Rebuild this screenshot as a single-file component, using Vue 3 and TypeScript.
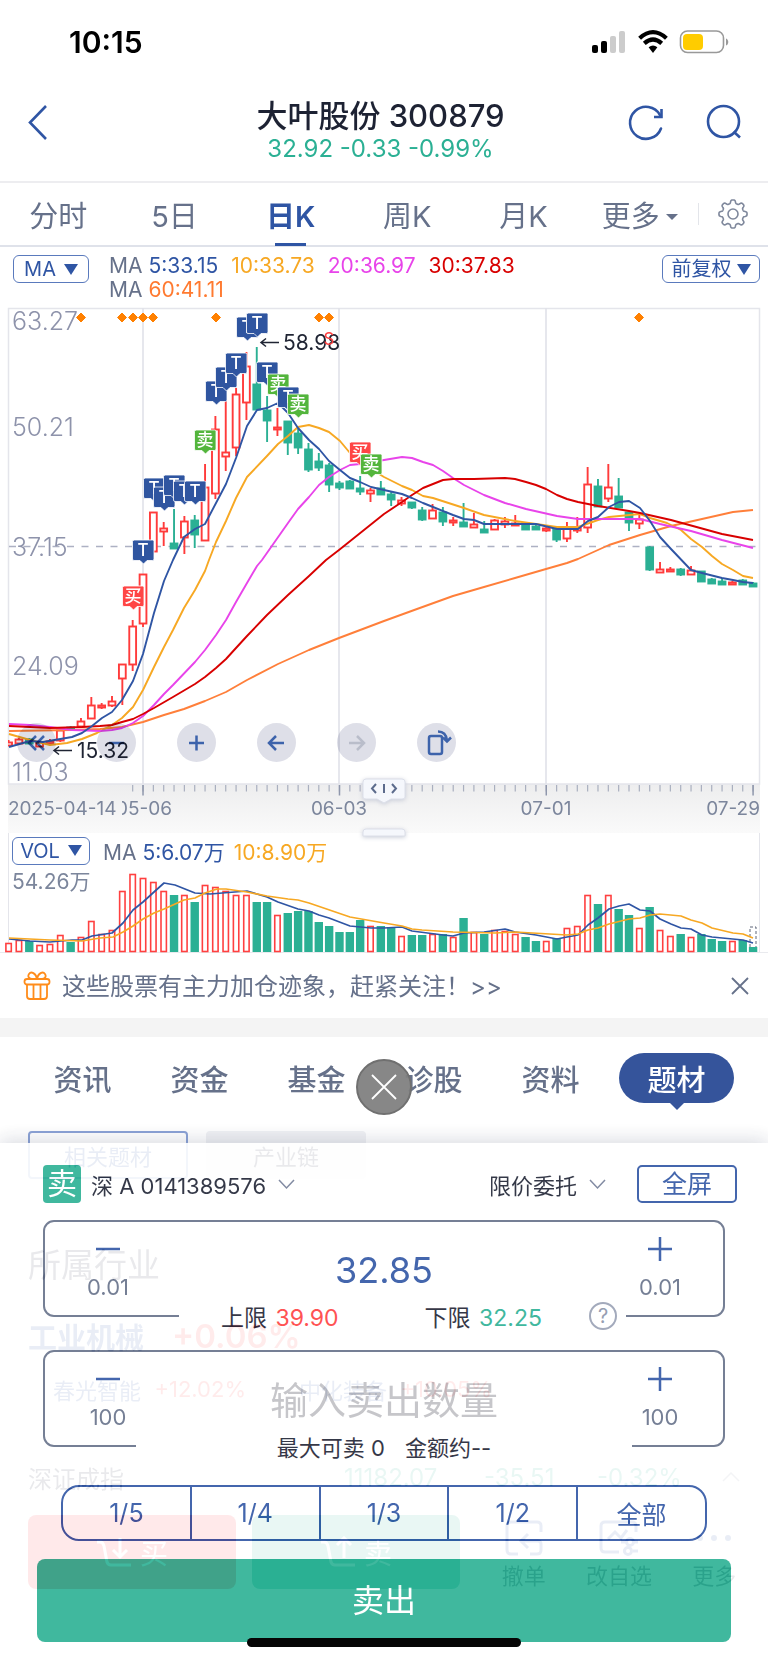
<script setup lang="ts">
import { ref } from 'vue'

type Kind = 'r' | 'g'
/** kind, high, body top, body bottom, low, volume height */
type Candle = [Kind, number, number, number, number, number]

const candles: Candle[] = [
  ['r', 740, 742, 745, 746, 9], ['r', 738, 739, 743, 743, 12], ['g', 738, 739, 743, 744, 11],
  ['r', 741, 742, 746, 746, 7], ['r', 739, 741, 743, 744, 8], ['r', 730, 730, 740, 742, 17],
  ['g', 726, 727, 729, 730, 10], ['r', 718, 721, 726, 728, 15], ['r', 697, 705, 718, 718, 31],
  ['r', 703, 705, 707, 709, 18], ['r', 696, 701, 705, 707, 22], ['r', 664, 664, 678, 705, 61],
  ['r', 620, 626, 664, 671, 78], ['r', 574, 574, 623, 627, 74], ['r', 512, 512, 551, 551, 70],
  ['r', 522, 528, 531, 546, 61], ['g', 509, 543, 548, 549, 57], ['r', 516, 521, 537, 554, 57],
  ['g', 515, 520, 534, 548, 50], ['r', 464, 487, 540, 541, 67], ['r', 416, 429, 493, 499, 65],
  ['r', 400, 452, 456, 471, 61], ['r', 388, 394, 447, 456, 57], ['r', 352, 366, 402, 420, 57],
  ['g', 347, 384, 409, 410, 50], ['g', 396, 410, 420, 442, 50], ['r', 408, 427, 429, 436, 37],
  ['g', 421, 421, 442, 455, 39], ['g', 428, 433, 447, 454, 41], ['g', 443, 449, 469, 472, 41],
  ['g', 453, 461, 467, 471, 30], ['g', 463, 465, 484, 492, 26], ['g', 481, 483, 487, 490, 20],
  ['g', 480, 481, 488, 489, 20], ['g', 476, 488, 491, 495, 32], ['r', 488, 490, 493, 502, 26],
  ['g', 481, 488, 494, 494, 26], ['g', 491, 494, 499, 506, 25], ['r', 497, 500, 503, 506, 16],
  ['g', 502, 502, 507, 509, 17], ['g', 507, 510, 519, 521, 17], ['r', 504, 510, 518, 519, 18],
  ['g', 507, 512, 521, 526, 18], ['r', 517, 520, 522, 526, 15], ['g', 503, 522, 526, 526, 34],
  ['r', 513, 524, 527, 528, 20], ['g', 521, 529, 532, 533, 18], ['r', 519, 520, 529, 530, 22],
  ['r', 517, 521, 524, 528, 21], ['r', 515, 523, 525, 525, 18], ['g', 523, 523, 529, 529, 15],
  ['g', 524, 526, 529, 529, 11], ['r', 526, 528, 530, 532, 11], ['g', 527, 528, 539, 542, 14],
  ['r', 522, 527, 538, 542, 24], ['r', 517, 527, 530, 533, 26], ['r', 467, 484, 527, 533, 57],
  ['g', 479, 486, 506, 507, 48], ['r', 464, 487, 498, 502, 57], ['g', 478, 496, 507, 508, 43],
  ['g', 512, 512, 522, 531, 37], ['r', 514, 519, 523, 529, 24], ['g', 546, 547, 569, 571, 45],
  ['r', 562, 569, 572, 573, 22], ['r', 567, 569, 571, 572, 16], ['g', 568, 569, 574, 576, 18],
  ['r', 566, 570, 574, 574, 15], ['g', 571, 571, 581, 581, 18], ['g', 578, 579, 583, 584, 13],
  ['g', 578, 581, 584, 584, 11], ['r', 581, 582, 584, 585, 11], ['g', 579, 580, 584, 584, 12],
  ['g', 582, 583, 586, 587, 5],
]
const cx = (i: number) => 8.6 + i * 10.34

const averages = [
  { color: '#ff7f3a', points: '9,731 72,730 100,729 122,727 143,722 164,715 184,709 205,701 226,692 247,680 278,664 309,650 339,638 384,621 417,609 453,596 484,587 515,578 546,569 567,563 578,559 609,545 640,535 671,526 702,519 733,512 743,511 753,510' },
  { color: '#f7a823', points: '9,734 30,740 50,745 67,743 82,739 97,733 112,725 122,718 133,707 143,690 154,667 164,647 173,630 184,608 195,590 205,571 209,560 216,542 226,521 236,498 247,477 267,456 278,444 288,436 298,427 309,425 319,428 329,432 340,441 350,453 371,469 384,477 402,486 412,490 423,496 433,498 464,508 484,515 515,521 536,524 557,527 578,527 598,520 609,517 640,514 650,518 667,523 681,530 691,539 702,547 712,556 722,564 733,570 743,576 753,578' },
  { color: '#e844ea', points: '9,724 30,725 50,727 72,730 100,731 112,730 122,728 133,723 143,716 154,705 164,694 173,685 195,662 205,650 216,635 226,620 236,602 247,583 257,566 262,560 288,523 298,509 309,497 319,485 329,477 340,470 350,465 360,464 384,460 402,457 412,458 423,462 433,465 443,471 453,478 464,485 484,495 505,503 526,509 557,516 578,519 640,519 660,524 691,531 722,540 753,548' },
  { color: '#d80000', points: '9,726 30,727 50,728 82,727 100,726 112,725 122,722 133,719 143,714 154,708 173,697 195,684 205,677 216,668 226,659 236,648 247,636 267,615 288,595 309,576 326,560 339,550 384,514 402,502 412,495 423,488 433,484 443,480 453,479 474,479 505,478 515,479 526,482 536,485 546,489 557,495 567,499 578,502 598,506 629,511 640,513 671,520 722,534 753,540' },
  { color: '#2f55a4', points: '9,747 30,741 43,742 72,737 82,733 92,726 102,718 112,712 122,700 133,681 143,654 154,613 164,581 173,560 184,537 195,529 205,524 226,484 236,458 247,426 257,410 267,408 278,403 288,413 298,428 309,440 319,449 329,461 340,470 350,478 360,482 371,487 384,490 402,494 412,498 423,503 433,507 453,515 464,519 474,520 484,524 536,524 557,529 578,529 588,521 598,517 609,507 619,502 629,501 640,508 650,521 660,537 671,549 691,570 702,573 722,578 733,580 743,582 753,583' },
]

const volumeAverages = [
  { color: '#2f55a4', points: [9, 13, 20, 12, 30, 11, 50, 10, 72, 12, 82, 12, 92, 16, 112, 19, 123, 29, 133, 42, 143, 50, 154, 60, 164, 69, 175, 67, 195, 59, 210, 58, 247, 61, 267, 55, 278, 50, 298, 43, 309, 41, 319, 37, 329, 34, 350, 26, 371, 24, 384, 24, 402, 25, 412, 21, 443, 17, 453, 16, 464, 19, 484, 20, 505, 23, 515, 20, 536, 17, 557, 13, 567, 15, 578, 17, 588, 27, 598, 34, 609, 43, 619, 46, 629, 48, 640, 42, 650, 41, 660, 33, 671, 28, 681, 24, 691, 23, 702, 17, 712, 15, 743, 12, 753, 9] },
  { color: '#f7a823', points: [9, 14, 50, 12, 82, 11, 100, 14, 113, 15, 123, 20, 133, 26, 143, 33, 154, 39, 164, 43, 184, 52, 195, 54, 205, 59, 217, 63, 226, 63, 247, 60, 267, 56, 288, 53, 298, 52, 309, 49, 350, 35, 384, 29, 402, 26, 412, 23, 422, 22, 453, 20, 495, 19, 515, 20, 567, 17, 578, 18, 588, 22, 598, 24, 609, 28, 629, 33, 640, 34, 650, 37, 660, 38, 681, 36, 691, 32, 702, 29, 712, 24, 733, 19, 743, 18, 753, 14] },
]
const volumeBase = 84
const volumePath = (flat: number[]) => {
  const out: string[] = []
  for (let i = 0; i < flat.length; i += 2) out.push(`${flat[i]},${volumeBase - flat[i + 1]}`)
  return out.join(' ')
}

const markColors: Record<string, string> = { T: '#2f55a0', 卖: '#53b53c', 买: '#ff4545' }
const marks: [string, number, number][] = [
  ['买', 133, 586], ['T', 143, 540], ['T', 154, 478], ['T', 164, 487], ['T', 174, 475], ['T', 184, 481],
  ['T', 195, 481], ['卖', 205, 430], ['T', 216, 381], ['T', 226, 367], ['T', 236, 353], ['T', 247, 317],
  ['T', 257, 313], ['T', 267, 362], ['卖', 278, 374], ['T', 288, 387], ['卖', 298, 394], ['买', 360, 442],
  ['卖', 371, 454],
]
const events = [81, 122, 133, 143, 153, 216, 319, 329, 639]
const prices: [string, number][] = [['63.27', 330], ['50.21', 436], ['37.15', 556], ['24.09', 675], ['11.03', 781]]
const ticks = candles.map((_, i) => i).filter((i) => i >= 12)
const majorTicks = [13, 32, 52, 72]

const gearPath = (() => {
  let d = ''
  for (let k = 0; k < 160; k++) {
    const a = (k / 160) * Math.PI * 2
    const r = 12.4 + 1.7 * Math.tanh(2.2 * Math.cos(8 * a))
    d += `${k ? 'L' : 'M'}${(16 + r * Math.sin(a)).toFixed(2)} ${(16 - r * Math.cos(a)).toFixed(2)}`
  }
  return d + 'Z'
})()

const periods = ['分时', '5日', '日K', '周K', '月K']
const activePeriod = ref('日K')
const sections = ['资讯', '资金', '基金', '诊股', '资料', '题材']
const activeSection = ref('题材')
const shares = ['1/5', '1/4', '1/3', '1/2', '全部']
const price = ref('32.85')
const quantity = ref('')
</script>

<template>
  <div class="page">
    <div class="status">
      <span class="clock">10:15</span>
      <svg class="status-icons" width="140" height="28" viewBox="0 0 140 28" aria-hidden="true">
        <rect x="2" y="17" width="6" height="8" rx="2" /><rect x="11" y="13" width="6" height="12" rx="2" />
        <rect x="20" y="8" width="6" height="17" rx="2" fill="#ccc" /><rect x="29" y="3" width="6" height="22" rx="2" fill="#ccc" />
        <g fill="none" stroke="#000" stroke-width="4.2">
          <path d="M49.600 10.200Q63 -2 76.400 10.200" /><path d="M54.300 15.400Q63 7.600 71.700 15.400" />
        </g>
        <path d="M58.600 19.200Q63 15.600 67.400 19.200L63 25Z" />
        <rect x="90.500" y="3" width="43" height="21.500" rx="7" fill="none" stroke="#999" stroke-width="1.600" />
        <rect x="93" y="6" width="20" height="16" rx="4" fill="#fc0" />
        <path d="M136 10.500c3 1 3 6 0 7z" fill="#999" />
      </svg>
    </div>

    <header class="header">
      <button class="bare" aria-label="返回">
        <svg width="24" height="40" viewBox="0 0 24 40"><path d="M20 4 4 20.500 20 37" fill="none" stroke="#2f55a4" stroke-width="2.600" /></svg>
      </button>
      <div class="title">
        <h1>大叶股份 300879</h1>
        <p>32.92 -0.33 -0.99%</p>
      </div>
      <div class="header-tools">
        <button class="bare" aria-label="刷新">
          <svg width="40" height="40" viewBox="0 0 40 40" fill="none" stroke="#2f55a4" stroke-width="2.600" stroke-linecap="round"><path d="M35 26.500A16 16 0 1 1 34 13" /><path d="M35.500 7V15H28" stroke-linecap="butt" /></svg>
        </button>
        <button class="bare" aria-label="搜索">
          <svg width="40" height="40" viewBox="0 0 40 40" fill="none" stroke="#2f55a4" stroke-width="2.600"><circle cx="19.500" cy="19.500" r="15.500" /><path d="m29.500 29.500 6.500 6" /></svg>
        </button>
      </div>
    </header>

    <nav class="periods">
      <button v-for="p in periods" :key="p" :class="{ active: p === activePeriod }" @click="activePeriod = p">{{ p }}</button>
      <button class="more">更多<i class="caret"></i></button>
      <button class="gear" aria-label="设置">
        <svg width="32" height="32" viewBox="0 0 32 32" fill="none" stroke="#7f889c" stroke-width="1.600" stroke-linejoin="round"><path :d="gearPath" /><circle cx="16" cy="16" r="5" /></svg>
      </button>
    </nav>

    <div class="ma-row">
      <button class="chip">MA <i class="tri"></i></button>
      <div class="ma-list">
        <span>MA <b class="blue">5:33.15</b></span><b class="amber">10:33.73</b><b class="pink">20:36.97</b><b class="red">30:37.83</b>
        <span class="ma-second">MA <b class="orange">60:41.11</b></span>
      </div>
      <button class="chip adjust">前复权 <i class="tri"></i></button>
    </div>

    <div class="chart">
      <svg class="plot" viewBox="0 308 768 525" role="img" aria-label="日K线图">
        <defs>
          <linearGradient id="axisShade" x1="0" y1="0" x2="0" y2="1"><stop offset="0" stop-color="#ededee" /><stop offset="1" stop-color="#fafafa" /></linearGradient>
          <clipPath id="plotArea"><rect x="8" y="308" width="752" height="477" /></clipPath>
          <clipPath id="dateArea"><rect x="122" y="790" width="80" height="40" /></clipPath>
        </defs>
        <rect x="8" y="784" width="752" height="49" fill="url(#axisShade)" />
        <rect x="8.500" y="308.500" width="751" height="475.500" fill="none" stroke="#e4e5eb" stroke-width="1.500" />
        <g stroke="#e0e1e9" stroke-width="1.600"><path v-for="x in [143, 339, 546]" :key="x" :d="`M${x} 308V784`" /></g>
        <path d="M9 546.500H759" stroke="#adb1c3" stroke-width="1.300" stroke-dasharray="7 7.500" />
        <g class="price"><text v-for="p in prices" :key="p[0]" x="12" :y="p[1]">{{ p[0] }}</text></g>
        <g clip-path="url(#plotArea)">
          <g v-for="(c, i) in candles" :key="i" :stroke="c[0] === 'r' ? '#ff3b3b' : '#2bb094'" stroke-width="1.900">
            <path :d="`M${cx(i)} ${c[1]}V${c[2]}M${cx(i)} ${c[3]}V${c[4]}`" />
            <rect :x="cx(i) - 3.4" :y="c[2] + 0.5" width="6.800" :height="c[3] - c[2]" :fill="c[0] === 'r' ? '#fff' : '#2bb094'" />
          </g>
          <polyline v-for="a in averages" :key="a.color" :points="a.points" :stroke="a.color" fill="none" stroke-width="1.900" stroke-linejoin="round" />
        </g>
        <path v-for="x in events" :key="x" :d="`M${x} 313l4.500 4.500-4.500 4.500-4.500-4.500z`" fill="#ff8000" stroke="#ff8000" stroke-linejoin="round" />
        <g class="mark" v-for="m in marks" :key="m[1]">
          <path :d="`M${m[1] - 9.5} ${m[2]}h19q1.500 0 1.500 1.500v17.500q0 1.500-1.500 1.500h-5.500l-3.500 3.500-3.500-3.500h-6q-1.500 0-1.500-1.500v-17.500q0-1.500 1.500-1.500z`" :fill="markColors[m[0]]" stroke="#fff" stroke-width="0.800" />
          <text :x="m[1]" :y="m[2] + 16">{{ m[0] }}</text>
        </g>
        <g fill="none" stroke="#1f2433" stroke-width="1.500"><path d="M279 342.500H261m5-4-5 4 5 4" /><path d="M72 750.500H54m5-4-5 4 5 4" /></g>
        <text class="extreme" x="283" y="350">58.98</text>
        <text class="extreme" x="77" y="758">15.32</text>
        <text class="sell-flag" x="329" y="345">S</text>
        <g stroke="#a9afbf" stroke-width="1.200"><path v-for="i in ticks" :key="i" :d="`M${cx(i)} 785v6.500`" /></g>
        <g stroke="#8f97ac" stroke-width="1.500"><path v-for="i in majorTicks" :key="i" :d="`M${cx(i)} 785v10.500`" /></g>
        <g class="date">
          <text x="8" y="815">2025-04-14</text>
          <text x="144" y="815" text-anchor="middle" clip-path="url(#dateArea)">05-06</text>
          <text x="339" y="815" text-anchor="middle">06-03</text>
          <text x="546" y="815" text-anchor="middle">07-01</text>
          <text x="760" y="815" text-anchor="end">07-29</text>
        </g>
        <path class="handle" d="M366 779H402q3 0 3 3V797q0 2-3 2H391l-7 4-7-4H366q-3 0-3-2V782q0-3 3-3z" />
        <path d="M376 784l-4 4.500 4 4.500M384 784v9M392 784l4 4.500-4 4.500" fill="none" stroke="#5c6b8c" stroke-width="2" />
        <path class="handle" d="M363 836V832q0-3 3-3H402q3 0 3 3V836z" />
      </svg>
      <div class="tools">
        <button aria-label="快退"><svg viewBox="0 0 39 39"><path d="M19 13l-7 7 7 7M27 13l-7 7 7 7" /></svg></button>
        <button aria-label="缩小"><svg viewBox="0 0 39 39"><path d="M12 20H27" /></svg></button>
        <button aria-label="放大"><svg viewBox="0 0 39 39"><path d="M12 20H27M19.500 12.500V27.500" /></svg></button>
        <button aria-label="左移"><svg viewBox="0 0 39 39"><path d="M27 20H12m7-7-7 7 7 7" /></svg></button>
        <button aria-label="右移" disabled><svg viewBox="0 0 39 39"><path d="M12 20H27m-7-7 7 7-7 7" /></svg></button>
        <button aria-label="横屏"><svg viewBox="0 0 39 39"><rect x="12" y="13" width="13" height="18" rx="2" /><path d="M21 8.500q8 0 9 9M26 14.500l4 4 4-4" /></svg></button>
      </div>
    </div>

    <div class="volume">
      <div class="vol-row">
        <button class="chip">VOL <i class="tri"></i></button>
        <span class="vol-text">MA <b class="blue">5:6.07万</b></span><b class="amber vol-text">10:8.90万</b>
      </div>
      <svg class="plot" viewBox="0 0 768 84" role="img" aria-label="成交量">
        <text class="vol-max" x="12" y="21">54.26万</text>
        <template v-for="(c, i) in candles" :key="i">
          <rect v-if="c[0] === 'r'" :x="cx(i) - 2.7" :y="volumeBase - c[5] + 0.5" width="5.400" :height="c[5] - 1" fill="#fff" stroke="#ff4040" stroke-width="1.600" />
          <rect v-else :x="cx(i) - 4.2" :y="volumeBase - c[5]" width="8.400" :height="c[5]" fill="#2bb094" />
        </template>
        <path d="M750 79V59H756V79" fill="none" stroke="#5c6478" stroke-dasharray="3 2" />
        <polyline v-for="a in volumeAverages" :key="a.color" :points="volumePath(a.points)" :stroke="a.color" fill="none" stroke-width="1.700" stroke-linejoin="round" />
      </svg>
    </div>

    <div class="notice">
      <svg width="28" height="30" viewBox="0 0 28 30" fill="none" stroke="#ff8c1a" stroke-width="1.800" aria-hidden="true">
        <rect x="1.500" y="8" width="25" height="5.500" rx="2.500" /><path d="M4 13.500V25q0 3 3 3H21q3 0 3-3V13.500M10.500 14V28M17.500 14V28" />
        <path d="M14 8C13 2 8 0 6 3S7 8 9 8M14 8C15 2 20 0 22 3S21 8 19 8" />
      </svg>
      <a href="#">这些股票有主力加仓迹象，赶紧关注！&gt;&gt;</a>
      <button class="bare" aria-label="关闭提示"><svg width="20" height="20" viewBox="0 0 20 20"><path d="m2 2 16 16M18 2 2 18" stroke="#66718a" stroke-width="1.800" /></svg></button>
    </div>

    <nav class="sections">
      <button v-for="s in sections" :key="s" :class="{ active: s === activeSection }" @click="activeSection = s">{{ s }}</button>
    </nav>

    <main class="themes">
      <div class="theme-tabs"><button class="on">相关题材</button><button>产业链</button></div>
      <h2>所属行业</h2>
      <p class="industry"><span>工业机械</span><strong>+0.06%</strong></p>
      <div class="stocks">
        <p><span>春光智能</span><em>+12.02%</em></p>
        <p><span>中化装备</span><em>+10.05%</em></p>
      </div>
      <div class="index">
        <span>深证成指</span><b>11182.07</b><b>-35.51</b><b>-0.32%</b>
        <svg width="18" height="12" viewBox="0 0 18 12"><path d="m1 10 8-8 8 8" fill="none" stroke="#8890a4" stroke-width="1.500" /></svg>
      </div>
      <div class="dock">
        <button class="buy"><svg width="36" height="32" viewBox="0 0 36 32"><path d="M1 6h3q3 0 4 4l3 16q1 3 4 3H35M24 2V21M17 14l7 7 7-7" /></svg>买</button>
        <button class="sell"><svg width="36" height="32" viewBox="0 0 36 32"><path d="M1 6h3q3 0 4 4l3 16q1 3 4 3H35M24 22V2M17 9l7-7 7 7" /></svg>卖</button>
        <div class="acts">
          <button><svg width="40" height="36" viewBox="0 0 40 36"><path d="M37 12V6q0-4-4-4H7Q3 2 3 6V30q0 4 4 4H14M26 34H33q4 0 4-4V24q0-3-3-3H17m7-7-7 7 7 7" /></svg>撤单</button>
          <button><svg width="40" height="36" viewBox="0 0 40 36"><path d="M37 12V6q0-4-4-4H6Q2 2 2 6V28q0 4 4 4H20M9 19l7-7 6 6 6-8M22 22H27M34 22H39M24 31H26M34 31H39" /><circle cx="31" cy="22" r="3.500" /><circle cx="29" cy="31" r="3.500" /></svg>改自选</button>
          <button><svg width="40" height="36" viewBox="0 0 40 36"><path d="M6 18h0M20 18h0M34 18h0" stroke-width="6" stroke-linecap="round" /></svg>更多</button>
        </div>
      </div>
    </main>

    <section class="sheet" aria-label="卖出委托">
      <div class="sheet-head">
        <span class="side">卖</span>
        <button class="pick">深 A 0141389576 <svg width="17" height="11" viewBox="0 0 17 11"><path d="m1 1 7.500 8L16 1" /></svg></button>
        <button class="pick type">限价委托 <svg width="17" height="11" viewBox="0 0 17 11"><path d="m1 1 7.500 8L16 1" /></svg></button>
        <button class="full">全屏</button>
      </div>
      <div class="field">
        <button class="step"><svg width="24" height="26" viewBox="0 0 24 26"><path d="M0 13H24" /></svg>0.01</button>
        <input v-model="price" type="text" aria-label="委托价格" />
        <button class="step"><svg width="24" height="26" viewBox="0 0 24 26"><path d="M0 13H24M12 1V25" /></svg>0.01</button>
        <div class="note limits">
          <span>上限 <b class="up">39.90</b></span>
          <span>下限 <b class="down">32.25</b></span>
          <button class="bare help" aria-label="说明">?</button>
        </div>
      </div>
      <div class="field">
        <button class="step"><svg width="24" height="26" viewBox="0 0 24 26"><path d="M0 13H24" /></svg>100</button>
        <input v-model="quantity" class="quantity" type="text" placeholder="输入卖出数量" aria-label="卖出数量" />
        <button class="step"><svg width="24" height="26" viewBox="0 0 24 26"><path d="M0 13H24M12 1V25" /></svg>100</button>
        <div class="note totals"><span>最大可卖 0</span><span>金额约--</span></div>
      </div>
      <div class="shares"><button v-for="s in shares" :key="s">{{ s }}</button></div>
      <button class="submit">卖出</button>
    </section>

    <button class="dismiss" aria-label="关闭"><svg width="28" height="28" viewBox="0 0 28 28"><path d="m2 2 24 24M26 2 2 26" stroke="#fff" stroke-width="1.800" /></svg></button>
    <div class="home"></div>
  </div>
</template>

<style>
body { margin: 0; background: #fff; }
</style>

<style scoped>
.page { position: relative; overflow: hidden; background: #fff; color: #66718a; font-family: Inter, "Noto Sans CJK SC", sans-serif; }
.page *, .page *::before, .page *::after { box-sizing: border-box; }
button { margin: 0; padding: 0; border: 0; background: none; color: inherit; font: inherit; }
h1, h2, p { margin: 0; }
b, em { font-weight: 400; font-style: normal; }
svg { display: block; }
.bare { display: block; }
.blue { color: #2f55a4; }
.amber { color: #f7a823; }
.pink { color: #e844ea; }
.red { color: #d80000; }
.orange { color: #ff7a30; }

.status { display: flex; justify-content: space-between; align-items: center; height: 84px; padding: 0 38px 0 69px; }
.clock { color: #000; font-size: 30px; font-weight: 600; }
.header { position: relative; display: flex; justify-content: space-between; align-items: flex-start; height: 99px; padding: 18px 24px 0 26px; border-bottom: 2px solid #ededf0; }
.title { position: absolute; inset: 14px 107px auto 100px; text-align: center; pointer-events: none; }
h1 { color: #1d2233; font-size: 31px; line-height: 36px; font-weight: 500; }
.title p { color: #2bb094; font-size: 24px; line-height: 30px; }
.header-tools { display: flex; gap: 38px; }

.periods { display: flex; height: 64px; border-bottom: 2px solid #dfe2ea; font-size: 29px; }
.periods button { position: relative; flex: 1; }
.periods .active { color: #2f55a4; font-weight: 600; }
.periods .active::after { content: ""; position: absolute; left: 50%; bottom: -1px; width: 31px; height: 3px; margin-left: -16px; background: #2f55a4; }
.caret { display: inline-block; margin-left: 6px; border: 6px solid transparent; border-top-color: #66718a; border-bottom: 0; vertical-align: 7px; }
.periods .gear { flex: 0 0 70px; display: grid; place-items: center; }
.gear::before { content: ""; position: absolute; left: 0; top: 20px; height: 22px; border-left: 1px solid #e3e5ea; }

.ma-row { display: flex; align-items: flex-start; height: 61px; padding: 8px 8px 0 13px; }
.chip { display: inline-flex; align-items: center; justify-content: center; gap: 8px; min-width: 76px; height: 28px; border: 1px solid #5a7abd; border-radius: 6px; color: #2f55a4; font-size: 20px; line-height: 26px; white-space: nowrap; }
.tri { border: 7px solid transparent; border-top: 11px solid #2f55a4; border-bottom: 0; }
.adjust { min-width: 98px; margin-left: auto; gap: 5px; }
.ma-list { display: flex; flex-wrap: wrap; column-gap: 13px; width: 420px; margin: -1px 0 0 20px; font-size: 21px; line-height: 24px; }
.ma-second { flex-basis: 100%; }

.chart { position: relative; }
.plot { width: 100%; height: auto; overflow: visible; }
.price { fill: #8e93ab; font-size: 25px; font-weight: 300; }
.mark text { fill: #fff; font-size: 17px; font-weight: 500; text-anchor: middle; }
.extreme { fill: #1f2433; font-size: 21px; }
.sell-flag { fill: #ff4040; font-size: 17px; text-anchor: middle; }
.date { fill: #7c869c; font-size: 19px; }
.handle { fill: #f5f7fc; stroke: #dcdfe9; filter: drop-shadow(0 1px 2px #c8ccd8); }
.tools { position: absolute; left: 17px; bottom: 71px; display: flex; gap: 41px; mix-blend-mode: multiply; }
.tools button { width: 39px; height: 39px; border-radius: 50%; background: #dedfe8; }
.tools svg { fill: none; stroke: #3d63ab; stroke-width: 2.5; }
.tools button:disabled svg { stroke: #b9bdca; }

.volume { background: linear-gradient(#e4e5eb, #e4e5eb) 8px 0 / 1px 100% no-repeat, linear-gradient(#e4e5eb, #e4e5eb) calc(100% - 8px) 0 / 1px 100% no-repeat; border-bottom: 1px solid #e9eaee; }
.vol-row { display: flex; align-items: center; height: 35px; padding: 0 12px; font-size: 21px; }
.vol-row .chip { min-width: 78px; }
.vol-text { margin-left: 9px; }
.chip + .vol-text { margin-left: 13px; }
.vol-max { fill: #7c869c; font-size: 21px; }

.notice { display: flex; align-items: center; gap: 11px; height: 84px; padding: 0 18px 18px 23px; background: linear-gradient(#f4f4f4, #f4f4f4) 0 100% / 100% 19px no-repeat; }
.notice a { flex: 1; padding-bottom: 4px; color: #66718a; font-size: 24px; text-decoration: none; }

.sections { display: flex; height: 94px; padding: 16px 34px 0 24px; font-size: 29px; font-weight: 500; }
.sections button { position: relative; flex: 117; height: 50px; }
.sections .active { flex: 115; margin-left: 10px; border-radius: 25px; background: #35549b; color: #fff; }
.sections .active::after { content: ""; position: absolute; top: 49px; left: 50%; margin-left: -8px; border: 8px solid transparent; border-top-color: #35549b; border-bottom: 0; }

.themes { height: 532px; padding: 0 28px; color: #2a2f45; }
.theme-tabs { display: flex; gap: 18px; font-size: 22px; }
.theme-tabs button { width: 160px; height: 48px; border-radius: 4px; background: #f0f1f4; }
.theme-tabs .on { border: 2px solid #8ca3d6; background: #fff; color: #2f55a4; }
h2 { margin-top: 62px; font-size: 33px; line-height: 48px; font-weight: 400; }
.industry { display: flex; align-items: center; gap: 28px; height: 50px; margin-top: 22px; color: #2f55a4; font-size: 29px; font-weight: 600; }
.industry strong { color: #ff4040; font-size: 33px; font-weight: 600; }
.stocks { display: flex; gap: 18px; margin-top: 5px; font-size: 22px; }
.stocks p { display: flex; justify-content: space-between; align-items: center; width: 228px; height: 46px; padding: 0 10px 0 25px; background: #fafafc; color: #2f55a4; }
.stocks em { color: #ff4040; }
.index { display: flex; align-items: center; height: 60px; margin-top: 35px; font-size: 24px; }
.index span { width: 316px; }
.index b { width: 140px; color: #2bb094; }
.index b + b { width: 113px; }
.index svg { margin-left: auto; }
.dock { display: flex; gap: 16px; margin: 8px -28px 0 0; }
.dock button { display: flex; align-items: center; justify-content: center; gap: 8px; height: 74px; color: #fff; font-size: 28px; }
.dock svg { fill: none; stroke: currentColor; stroke-width: 3; }
.dock .buy, .dock .sell { width: 208px; border-radius: 8px; background: #ff2d37; }
.dock .sell { background: #2bb094; }
.acts { flex: 1; display: flex; padding: 5px 6px 0 0; }
.acts button { flex: 1; flex-direction: column; gap: 2px; color: #2a2f45; font-size: 22px; line-height: 36px; white-space: nowrap; }
.acts svg { color: #2f55a4; }

.sheet { position: absolute; left: 0; right: 0; bottom: 0; height: 520px; padding: 22px 37px; background: #fff; box-shadow: 0 -2px 18px rgba(50, 60, 90, 0.22); opacity: 0.9; color: #1d2233; }
.sheet-head { display: flex; align-items: center; height: 38px; margin: 0 -6px 17px 6px; font-size: 22px; }
.side { width: 38px; height: 38px; border-radius: 4px; background: #2bb094; color: #fff; font-size: 30px; line-height: 36px; text-align: center; }
.pick { display: flex; align-items: center; gap: 12px; margin-left: 10px; }
.pick svg { fill: none; stroke: #747e98; stroke-width: 1.5; }
.type { margin-left: auto; }
.full { width: 100px; height: 38px; margin-left: 31px; border: 2px solid #2f55a4; border-radius: 5px; color: #2f55a4; font-size: 25px; line-height: 32px; }
.field { position: relative; display: flex; height: 97px; margin: 0 6px 33px; border: 2px solid #66718a; border-radius: 11px; }
.step { display: flex; flex-direction: column; align-items: center; width: 126px; padding-top: 14px; color: #66718a; font-size: 22px; line-height: 50px; }
.step svg { stroke: #2f55a4; stroke-width: 2.5; }
.field input { flex: 1; min-width: 0; height: 96px; padding: 0; border: 0; background: none; color: #2f55a4; font: inherit; font-size: 36px; text-align: center; outline: 0; }
.field .quantity { font-size: 38px; }
.field input::placeholder { color: #c0c0c4; opacity: 1; }
.note { position: absolute; bottom: -17px; display: flex; align-items: center; justify-content: center; height: 32px; background: #fff; font-size: 22px; white-space: nowrap; }
.limits { left: 134px; right: 97px; justify-content: flex-start; padding-left: 42px; font-size: 23px; }
.limits span + span { margin-left: 86px; }
.up { margin-left: 2px; color: #ff4040; }
.down { margin-left: 2px; color: #2bb094; }
.help { width: 28px; height: 28px; margin-left: auto; margin-right: 9px; border: 2px solid #99a1b5; border-radius: 50%; color: #8b94aa; font-size: 20px; line-height: 24px; }
.totals { left: 91px; right: 91px; gap: 20px; }
.shares { display: flex; height: 56px; margin: 38px 24px 18px; border: 2px solid #2f55a4; border-radius: 18px; color: #2f55a4; font-size: 25px; }
.shares button { flex: 1; }
.shares button + button { border-left: 2px solid #2f55a4; }
.submit { display: block; width: 100%; height: 83px; padding-bottom: 6px; border-radius: 8px; background: #2bb094; color: #fff; font-size: 32px; }

.dismiss { position: absolute; left: 50%; bottom: 548px; display: grid; place-items: center; width: 56px; height: 56px; margin-left: -28px; border: 2px solid #707070; border-radius: 50%; background: rgba(128, 128, 128, 0.94); }
.home { position: absolute; left: 50%; bottom: 16px; width: 274px; height: 9px; margin-left: -137px; border-radius: 5px; background: #050505; }
</style>
